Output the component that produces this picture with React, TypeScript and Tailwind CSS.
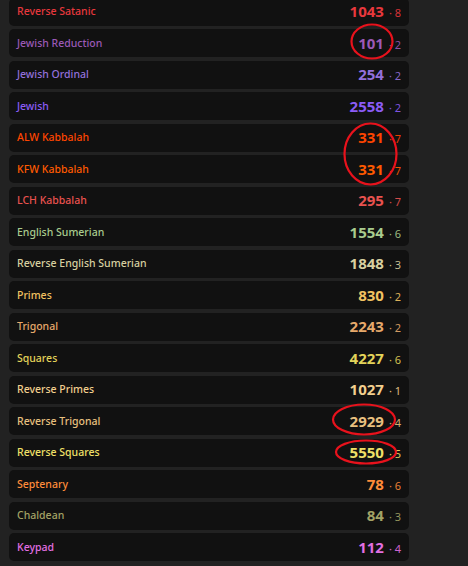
import React from "react";

type Row = { name: string; value: number; digit: number; color: string };

const rows: Row[] = [
  { name: "Reverse Satanic", value: 1043, digit: 8, color: "#e8383d" },
  { name: "Jewish Reduction", value: 101, digit: 2, color: "#9b59b6" },
  { name: "Jewish Ordinal", value: 254, digit: 2, color: "#9370db" },
  { name: "Jewish", value: 2558, digit: 2, color: "#8b5cf6" },
  { name: "ALW Kabbalah", value: 331, digit: 7, color: "#ff4500" },
  { name: "KFW Kabbalah", value: 331, digit: 7, color: "#ff5a00" },
  { name: "LCH Kabbalah", value: 295, digit: 7, color: "#e8524f" },
  { name: "English Sumerian", value: 1554, digit: 6, color: "#a9cc8e" },
  { name: "Reverse English Sumerian", value: 1848, digit: 3, color: "#d8d0a0" },
  { name: "Primes", value: 830, digit: 2, color: "#f2c261" },
  { name: "Trigonal", value: 2243, digit: 2, color: "#e6a96b" },
  { name: "Squares", value: 4227, digit: 6, color: "#e3d45a" },
  { name: "Reverse Primes", value: 1027, digit: 1, color: "#f2cf8e" },
  { name: "Reverse Trigonal", value: 2929, digit: 4, color: "#e8c07f" },
  { name: "Reverse Squares", value: 5550, digit: 5, color: "#f0e068" },
  { name: "Septenary", value: 78, digit: 6, color: "#ff8c3a" },
  { name: "Chaldean", value: 84, digit: 3, color: "#a3a365" },
  { name: "Keypad", value: 112, digit: 4, color: "#e26fe2" },
];

export default function App() {
  return (
    <div
      className="relative w-[468px] h-[566px] overflow-hidden bg-[#222222]"
      style={{ fontFamily: '"Noto Sans", "Open Sans", sans-serif' }}
    >
      <div className="flex flex-col gap-[3.5px] pl-[9px] -mt-[2.5px] w-[409px]">
        {rows.map((r, i) => (
          <div
            key={i}
            className="flex items-center justify-between h-[28px] rounded-[5px] bg-[#111111] pl-[8px] pr-[8px]"
          >
            <span className="text-[10.5px] leading-none font-medium" style={{ color: r.color }}>
              {r.name}
            </span>
            <span className="flex items-baseline leading-none" style={{ color: r.color }}>
              <span className="text-[15px] font-bold">{r.value}</span>
              <span className="text-[11px] ml-[5px] opacity-90">· {r.digit}</span>
            </span>
          </div>
        ))}
      </div>
      <svg
        className="absolute left-0 top-0 pointer-events-none"
        width="468"
        height="566"
        viewBox="0 0 468 566"
        fill="none"
      >
        <ellipse cx="372" cy="41.5" rx="20.5" ry="17" stroke="#e8121c" strokeWidth="2.2" />
        <ellipse cx="370.5" cy="154" rx="26" ry="30.5" stroke="#e8121c" strokeWidth="2.2" />
        <ellipse cx="364" cy="419.5" rx="31" ry="15" stroke="#e8121c" strokeWidth="2.2" />
        <ellipse cx="366" cy="452" rx="30" ry="11.5" stroke="#e8121c" strokeWidth="2.2" />
      </svg>
    </div>
  );
}
